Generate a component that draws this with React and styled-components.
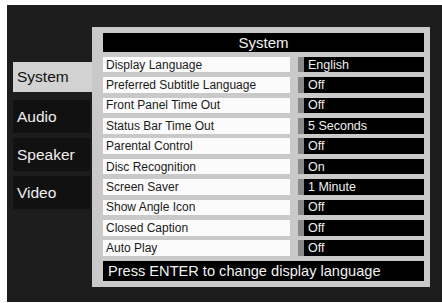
import React from "react";
import styled, { createGlobalStyle } from "styled-components";

const Global = createGlobalStyle`
  html, body {
    margin: 0;
    padding: 0;
    background: #fdfdfd;
  }
  body {
    font-family: "Liberation Sans", Arial, sans-serif;
  }
`;

const Screen = styled.div`
  margin: 5px 0 0 7px;
  height: 297px;
  background: #1d1d1d;
  display: flex;
`;

const Sidebar = styled.div`
  width: 85px;
  padding-top: 57px;
  display: flex;
  flex-direction: column;
  gap: 5px;
`;

const Tab = styled.div`
  height: ${(p) => (p.$active ? "30px" : "33px")};
  margin: ${(p) => (p.$active ? "0 0 3px 6px" : "0 2px 0 6px")};
  padding-left: 4px;
  display: flex;
  align-items: center;
  font-size: 15.5px;
  background: ${(p) => (p.$active ? "#d2d2d2" : "#111")};
  color: ${(p) => (p.$active ? "#111" : "#f0f0f0")};
`;

const Panel = styled.div`
  margin-top: 22px;
  width: 338px;
  height: 260px;
  box-sizing: border-box;
  background: #c9c9c9;
  padding: 6px 6px 6px 11px;
  display: flex;
  flex-direction: column;
  gap: 4.9px;
`;

const Title = styled.div`
  height: 19px;
  background: #000;
  color: #f2f2f2;
  font-size: 15px;
  display: flex;
  align-items: center;
  justify-content: center;
`;

const Row = styled.div`
  height: 15.5px;
  display: flex;
`;

const Label = styled.div`
  width: 187px;
  background: #fbfbfb;
  color: #1a1a1a;
  font-size: 12px;
  padding-left: 3px;
  box-sizing: border-box;
  display: flex;
  align-items: center;
`;

const Marker = styled.div`
  width: 6px;
  margin-left: 8px;
  background: #8a8a8a;
`;

const Value = styled.div`
  flex: 1;
  background: #000;
  color: #f0f0f0;
  font-size: 12.5px;
  padding-left: 4px;
  display: flex;
  align-items: center;
`;

const Hint = styled.div`
  height: 20px;
  background: #000;
  color: #f2f2f2;
  font-size: 14.6px;
  padding-left: 5px;
  display: flex;
  align-items: center;
`;

const tabs = ["System", "Audio", "Speaker", "Video"];

const rows = [
  ["Display Language", "English"],
  ["Preferred Subtitle Language", "Off"],
  ["Front Panel Time Out", "Off"],
  ["Status Bar Time Out", "5 Seconds"],
  ["Parental Control", "Off"],
  ["Disc Recognition", "On"],
  ["Screen Saver", "1 Minute"],
  ["Show Angle Icon", "Off"],
  ["Closed Caption", "Off"],
  ["Auto Play", "Off"],
];

const App = () => {
  return (
    <>
      <Global />
      <Screen>
        <Sidebar>
          {tabs.map((t, i) => (
            <Tab key={t} $active={i === 0}>
              {t}
            </Tab>
          ))}
        </Sidebar>
        <Panel>
          <Title>System</Title>
          {rows.map(([label, value]) => (
            <Row key={label}>
              <Label>{label}</Label>
              <Marker />
              <Value>{value}</Value>
            </Row>
          ))}
          <Hint>Press ENTER to change display language</Hint>
        </Panel>
      </Screen>
    </>
  );
};

export default App;
